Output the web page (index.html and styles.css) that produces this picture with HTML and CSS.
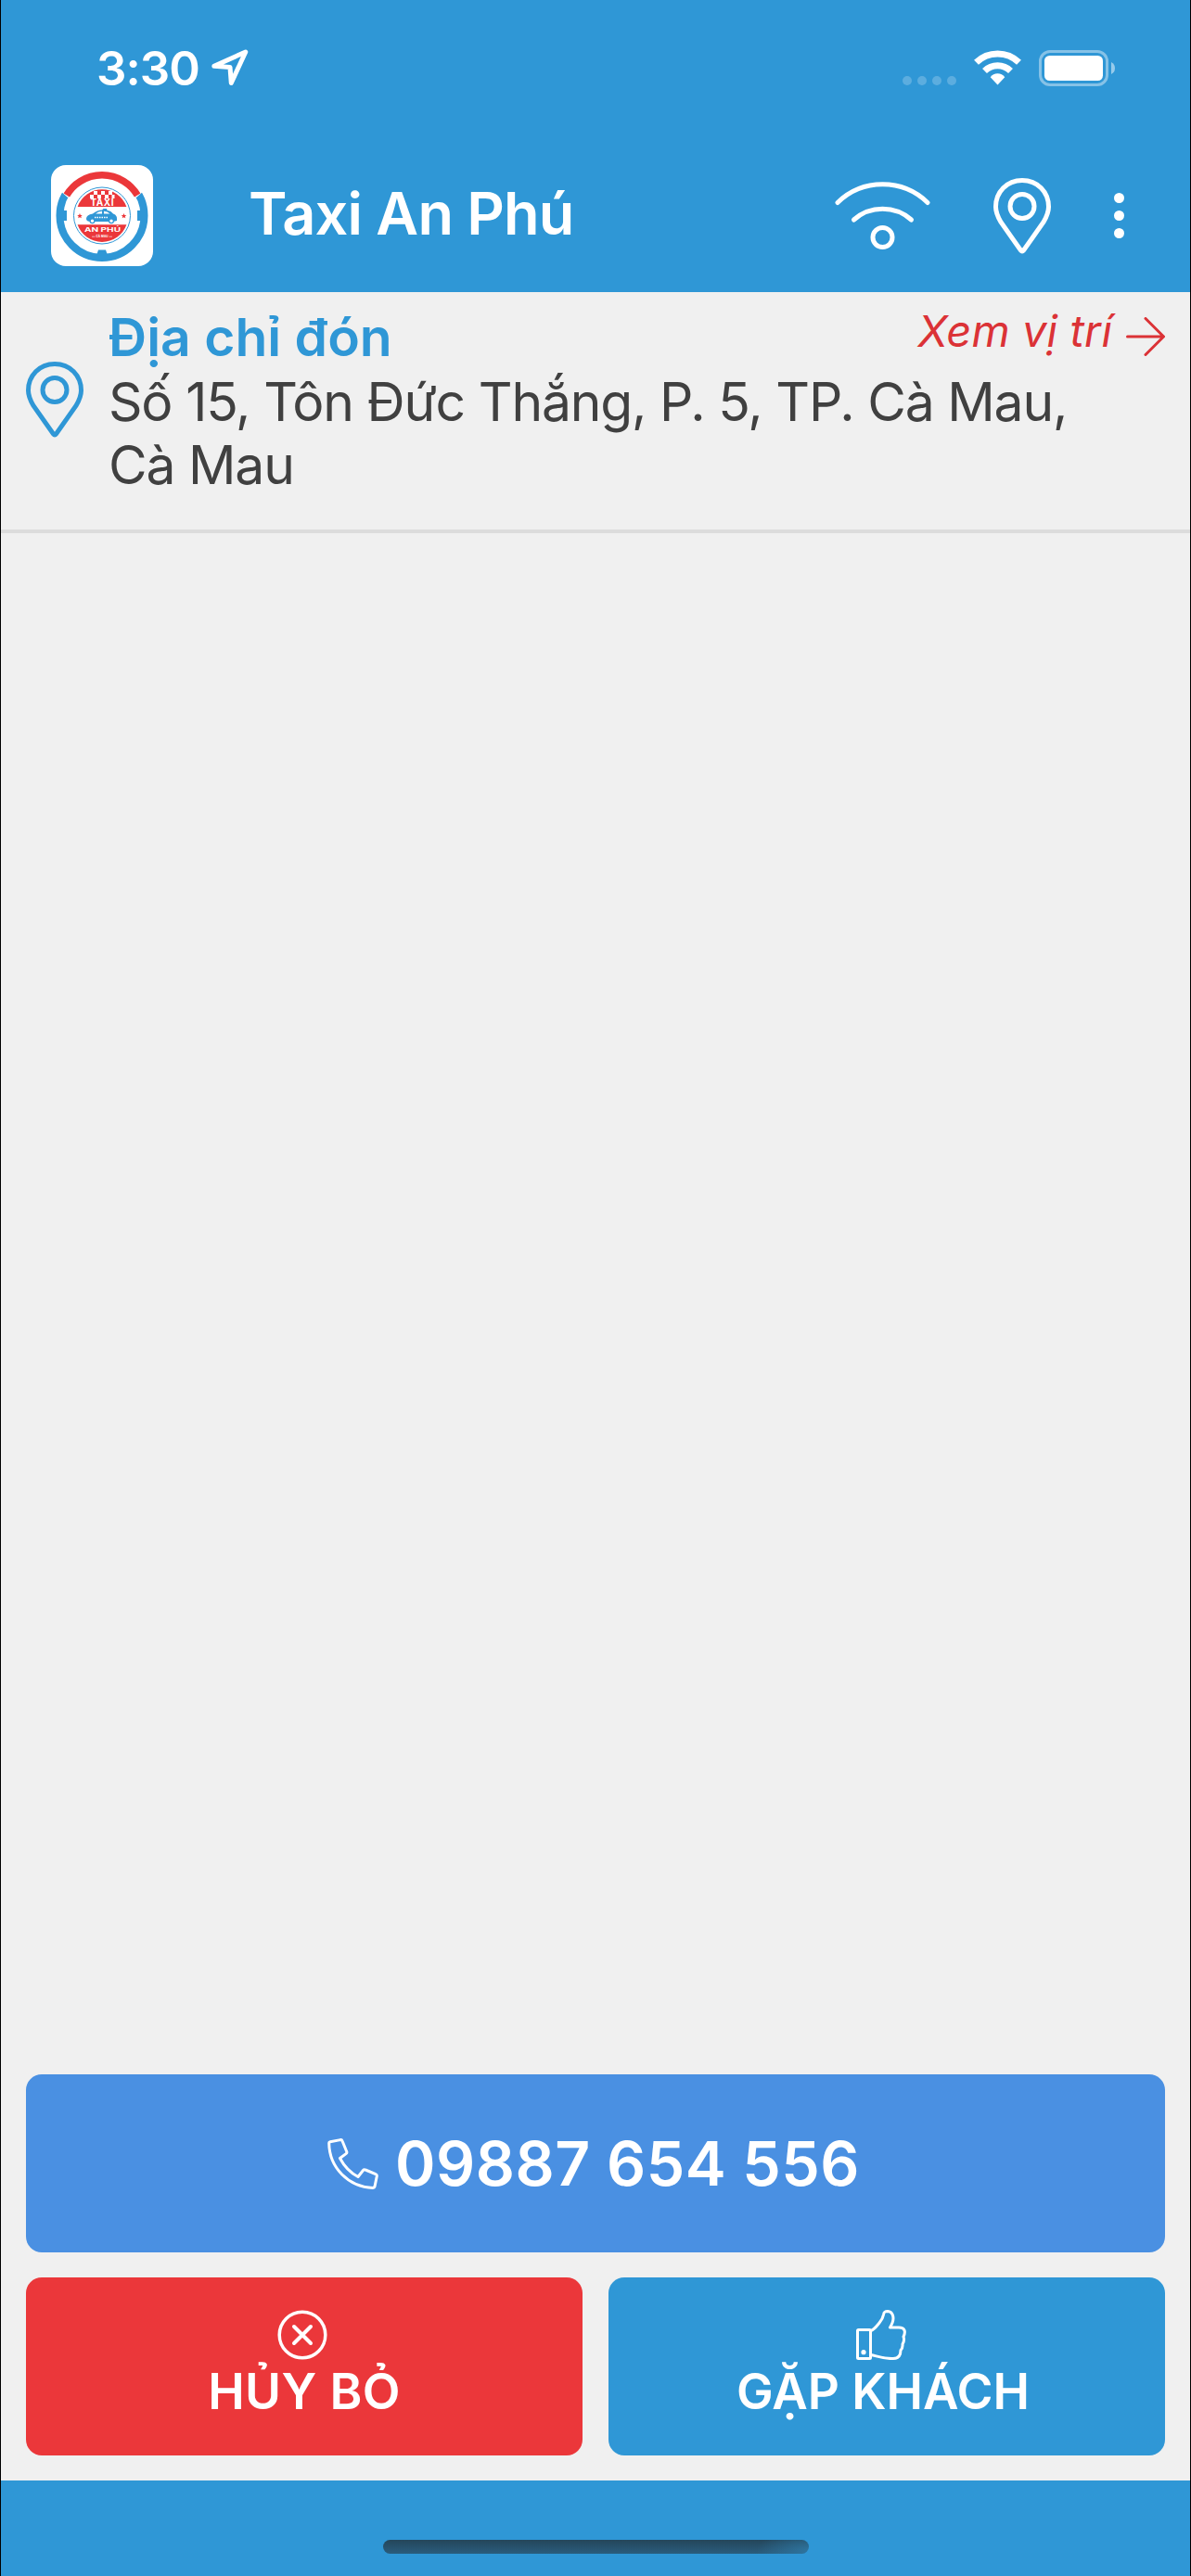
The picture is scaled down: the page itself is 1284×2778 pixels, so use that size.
FILE: index.html
```html
<!DOCTYPE html>
<html lang="vi">
<head>
  <meta charset="UTF-8">
  <meta name="viewport" content="width=device-width, initial-scale=1.0">
  <title>Taxi An Phú</title>
  <link rel="stylesheet" href="styles.css">
</head>
<body>
  <div class="screen">
    <div class="status-bar">
      <span class="time">3:30</span>
      <svg class="location-arrow" width="40" height="40" viewBox="0 0 40 40">
        <path d="M2.8 18.3 L36.8 3 L21.3 36.5 L20 19.5 Z" fill="none" stroke="#fff" stroke-width="5" stroke-linejoin="round"/>
      </svg>
      <div class="status-icons">
        <div class="signal"><i></i><i></i><i></i><i></i></div>
        <svg width="51" height="38" viewBox="0 0 51 38">
          <path d="M25.5 37.5 L17.7 29.3 A9.5 9.5 0 0 1 33.3 29.3 Z" fill="#fff"/>
          <path d="M11.5 22.5 A20 20 0 0 1 39.5 22.5" fill="none" stroke="#fff" stroke-width="7"/>
          <path d="M2.5 13.3 A33 33 0 0 1 48.5 13.3" fill="none" stroke="#fff" stroke-width="7"/>
        </svg>
        <svg width="82" height="39" viewBox="0 0 82 39">
          <rect x="1.5" y="1.5" width="72" height="36" rx="10.5" fill="none" stroke="#fff" stroke-width="3" opacity="0.42"/>
          <rect x="6" y="6" width="63" height="27" rx="5.5" fill="#fff"/>
          <path d="M78 13 Q82 15 82 19.5 Q82 24 78 26 Z" fill="#fff" opacity="0.5"/>
        </svg>
      </div>
    </div>

    <header>
      <svg class="logo" width="110" height="109" viewBox="0 0 110 109">
        <rect width="110" height="109" rx="16" fill="#fff"/>
        <circle cx="55" cy="54.5" r="45.5" fill="none" stroke="#2f97d6" stroke-width="8"/>
        <path d="M9 27 L18 35 L24 31 L86 31 L92 35 L101 27 L96 2 H14 Z" fill="#fff"/>
        <path d="M16.8 32.5 A44.5 44.5 0 0 1 93.2 32.5" fill="none" stroke="#eb373a" stroke-width="7.5"/>
        <path d="M12 49 h5 v11 h-5z M93 49 h5 v11 h-5z M51 91.5 h8 l2 6 h-12z" fill="#2f97d6"/>
        <circle cx="55" cy="54.5" r="30.5" fill="#fff" stroke="#2f97d6" stroke-width="1"/>
        <path d="M28.6 45 A28 28 0 0 1 81.4 45 Z M28.6 64.3 A28 28 0 0 0 81.4 64.3 Z" fill="#eb373a"/>
        <path d="M46 28h4v4h-4z M54 28h4v4h-4z M62 28h4v4h-4z M42 32h4v4h-4z M50 32h4v4h-4z M58 32h4v4h-4z M65.5 32h3v4h-3z" fill="#fff"/>
        <text x="55" y="44" class="logo-text" font-size="10" textLength="25">TAXI</text>
        <path d="M38 58 Q38 53.5 45 52.5 Q50 48.5 55 48.5 L56.5 47 L60 47 L60.5 48.8 Q65 49.5 67 52.5 Q72 54 71 60 L67 61 H43 Q38 61 38 58 Z" fill="#2f97d6"/>
        <path d="M48 52.5 Q51 49.8 55 49.8 V52.5 Z M57 49.8 Q61 49.8 63.5 52.5 H57 Z" fill="#fff"/>
        <path d="M47 56.5 H61" stroke="#fff" stroke-width="1.6" stroke-dasharray="1.5 1"/>
        <circle cx="44.5" cy="60.3" r="2.4" fill="#fff" stroke="#2f97d6" stroke-width="1.3"/>
        <circle cx="65" cy="60.3" r="2.4" fill="#fff" stroke="#2f97d6" stroke-width="1.3"/>
        <path id="star" d="M31 52 l0.8 1.9 2 0.1 -1.5 1.3 0.5 2 -1.8 -1.1 -1.8 1.1 0.5 -2 -1.5 -1.3 2 -0.1z" fill="#eb373a"/>
        <use href="#star" x="47.5"/>
        <text x="55.5" y="72.3" class="logo-text" font-size="6.5" textLength="39" lengthAdjust="spacingAndGlyphs">AN PHÚ</text>
        <text x="55" y="78.2" class="logo-text" font-size="3" textLength="13">CÀ MAU</text>
        <path d="M44 77.2 h3.5 M62.5 77.2 h3.5" stroke="#fff" stroke-width="0.6"/>
      </svg>
      <h1>Taxi An Phú</h1>
      <nav>
        <svg width="103" height="73" viewBox="0 0 103 73" fill="none" stroke="#fff" stroke-width="5" stroke-linecap="round">
          <path d="M3 22.5 A69.6 69.6 0 0 1 100 22.5"/>
          <path d="M20.5 41 A47 47 0 0 1 82.5 41"/>
          <circle cx="51.5" cy="60" r="10.5"/>
        </svg>
        <svg width="62" height="82" viewBox="0 0 62 82" fill="none" stroke="#fff" stroke-width="5">
          <path d="M31 2.5 C14.5 2.5 2.5 15 2.5 31 C2.5 37 4.5 41.5 8 47.5 L29.5 78 Q31 80 32.5 78 L54 47.5 C57.5 41.5 59.5 37 59.5 31 C59.5 15 47.5 2.5 31 2.5 Z"/>
          <circle cx="31" cy="30.5" r="13"/>
        </svg>
        <div class="menu"><i></i><i></i><i></i></div>
      </nav>
    </header>

    <section class="pickup">
      <svg class="pin" width="62" height="82" viewBox="0 0 62 82" fill="none" stroke="#2f97d6" stroke-width="5">
        <path d="M31 2.5 C14.5 2.5 2.5 15 2.5 31 C2.5 37 4.5 41.5 8 47.5 L29.5 78 Q31 80 32.5 78 L54 47.5 C57.5 41.5 59.5 37 59.5 31 C59.5 15 47.5 2.5 31 2.5 Z"/>
        <circle cx="31" cy="30.5" r="13"/>
      </svg>
      <div class="pickup-body">
        <div class="pickup-top">
          <h2>Địa chỉ đón</h2>
          <a class="view-link" href="#">
            <span>Xem vị trí</span>
            <svg width="42" height="42" viewBox="0 0 42 42" fill="none" stroke="#db3236" stroke-width="3" stroke-linecap="round" stroke-linejoin="round">
              <path d="M1.5 21 H40 M21 1.5 L40.5 21 L21 40.5"/>
            </svg>
          </a>
        </div>
        <p class="address">Số 15, Tôn Đức Thắng, P. 5, TP. Cà Mau, Cà Mau</p>
      </div>
    </section>

    <main></main>

    <div class="actions">
      <button class="btn call">
        <svg width="55" height="55" viewBox="0 0 55 55" fill="none" stroke="#fff" stroke-width="3" stroke-linejoin="round">
          <path d="M1.7 5 Q1.7 4 3 3.7 L14 1.6 Q15.5 1.4 16 2.8 L20.8 14.5 Q21.2 15.7 20 16.6 L13.5 21.5 C18 30 24.5 37 33 41.5 L38.5 34.5 Q39.5 33.3 41 34 L52 38.7 Q53.5 39.3 53.3 40.7 L51 52 Q50.6 53.4 49 53.4 C23 52.5 2 32 1.7 5 Z"/>
        </svg>
        <span>09887 654 556</span>
      </button>
      <div class="row">
        <button class="btn cancel">
          <svg width="54" height="54" viewBox="0 0 54 54" fill="none" stroke="#fff" stroke-width="3.5" stroke-linecap="round">
            <circle cx="27" cy="27" r="24.8"/>
            <path d="M18 18 L36 36 M36 18 L18 36" stroke-width="4"/>
          </svg>
          <span>HỦY BỎ</span>
        </button>
        <button class="btn meet">
          <svg width="54" height="54" viewBox="0 0 54 54" fill="none" stroke="#fff" stroke-width="3" stroke-linejoin="round">
            <rect x="1.5" y="21.5" width="14" height="31" rx="1"/>
            <circle cx="8" cy="45.7" r="2.6" fill="#fff" stroke="none"/>
            <path d="M16 22.5 C20 21 22 17.5 25 14 C29 9.5 29 8 29.5 5 C30 1.5 32 1.5 34 1.5 C40 2 41 9 39 14 Q38 16.5 36.5 19 H46 C53 19 53.5 24 51 29 Q52.5 33 50 37 Q50.5 40.5 48 43.5 C48 50 45 52.5 40 52.5 C28 53 22 49.5 16 48.5"/>
          </svg>
          <span>GẶP KHÁCH</span>
        </button>
      </div>
    </div>

    <footer>
      <div class="home-bar"></div>
    </footer>
  </div>
</body>
</html>
```
FILE: styles.css
```css
* {
  box-sizing: border-box;
}

body {
  margin: 0;
  font-family: Inter, "Liberation Sans", sans-serif;
  background-color: #f0f0f0;
  color: #404040;
}

h1, h2, p {
  margin: 0;
}

svg {
  display: block;
  flex-shrink: 0;
}

.screen {
  display: flex;
  flex-direction: column;
  width: 1284px;
  height: 2778px;
  border-left: 1px solid #000;
  border-right: 1px solid #000;
}

.status-bar {
  display: flex;
  align-items: center;
  height: 146px;
  padding: 0 81px 0 103px;
  background-color: #2f97d6;
  color: #fff;
}

.time {
  width: 124px;
  font-size: 51px;
  font-weight: 600;
  letter-spacing: -1px;
}

.status-icons {
  display: flex;
  align-items: center;
  gap: 19px;
  margin-left: auto;
}

.signal {
  display: flex;
  gap: 6px;
  padding-top: 27px;
}

.signal i {
  width: 10px;
  height: 10px;
  border-radius: 50%;
  background-color: rgba(255, 255, 255, 0.22);
}

header {
  display: flex;
  align-items: center;
  height: 169px;
  padding: 4px 71px 0 54px;
  background-color: #2f97d6;
  color: #fff;
}

.logo-text {
  fill: #fff;
  font-weight: 700;
  text-anchor: middle;
}

h1 {
  margin-left: 103px;
  padding-bottom: 5px;
  font-size: 63px;
  font-weight: 600;
  letter-spacing: -0.8px;
}

nav {
  display: flex;
  align-items: center;
  gap: 68px;
  margin-left: auto;
}

.menu {
  display: flex;
  flex-direction: column;
  gap: 8px;
}

.menu i {
  width: 11px;
  height: 11px;
  border-radius: 50%;
  background-color: #fff;
}

.pickup {
  display: flex;
  gap: 27px;
  padding: 15px 27px 35px;
  border-bottom: 4px solid #dcdcdc;
}

.pin {
  margin-top: 60px;
}

.pickup-body {
  flex: 1;
}

.pickup-top {
  display: flex;
  justify-content: space-between;
  height: 70px;
}

h2 {
  color: #2f97d6;
  font-size: 57px;
  font-weight: 600;
  line-height: 67px;
}

.view-link {
  display: flex;
  gap: 15px;
  color: #db3236;
  font-size: 47px;
  font-style: italic;
  line-height: 54px;
  letter-spacing: 0.1px;
  text-decoration: none;
}

.view-link svg {
  margin-top: 12px;
}

.address {
  padding-right: 60px;
  font-size: 57px;
  line-height: 68px;
  letter-spacing: -1.2px;
}

main {
  flex: 1;
}

.actions {
  display: flex;
  flex-direction: column;
  gap: 27px;
  padding: 0 27px 27px;
}

.row {
  display: grid;
  grid-template-columns: 1fr 1fr;
  gap: 28px;
}

.btn {
  display: flex;
  align-items: center;
  height: 192px;
  padding: 0;
  border: none;
  border-radius: 17px;
  color: #fff;
  font-family: inherit;
  font-weight: 600;
}

.call {
  justify-content: center;
  gap: 18px;
  padding-right: 4px;
  background-color: #4a90e2;
  font-size: 66px;
  letter-spacing: 0.5px;
}

.cancel,
.meet {
  flex-direction: column;
  gap: 2px;
  padding-top: 35px;
  font-size: 53px;
  line-height: 64px;
}

.cancel {
  background-color: #eb373a;
  letter-spacing: 0.4px;
}

.cancel svg {
  margin-right: 5px;
}

.meet {
  padding-right: 8px;
  background-color: #2f97d6;
}

.meet svg {
  margin-right: 4px;
}

footer {
  height: 103px;
  padding-top: 64px;
  background-color: #2f97d6;
}

.home-bar {
  width: 459px;
  height: 15px;
  margin: 0 auto;
  border-radius: 8px;
  background:
    radial-gradient(ellipse 56px 24px at 100% 80%, rgba(47, 125, 172, 0.75), transparent),
    linear-gradient(#24465a, #2a5c7d);
}
```
